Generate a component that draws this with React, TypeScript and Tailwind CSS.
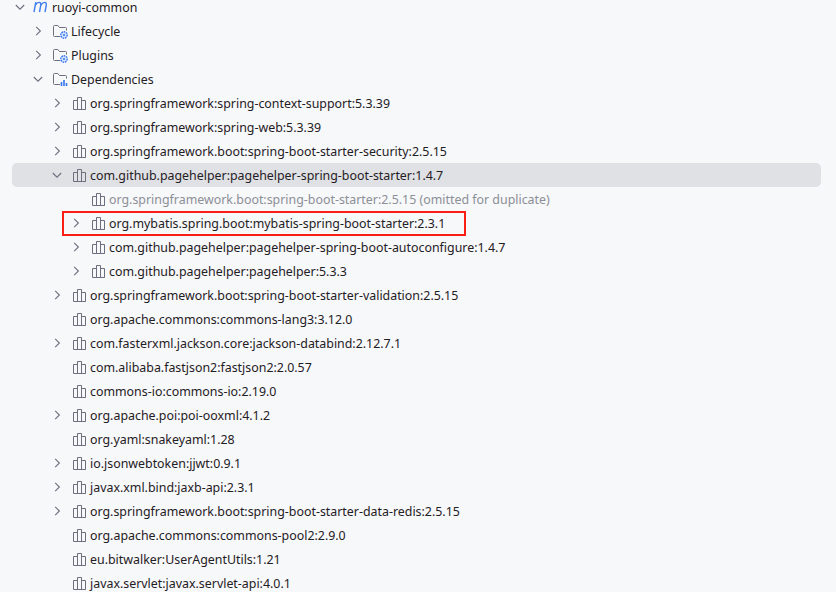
import type { ReactNode } from "react";

type Node = {
  label: string;
  level: 2 | 3;
  arrow?: "right" | "down";
  muted?: boolean;
  active?: boolean;
  boxed?: boolean;
};

const indent = {
  2: "pl-[40px]",
  3: "pl-[59px]",
};

const deps: Node[] = [
  { label: "org.springframework:spring-context-support:5.3.39", level: 2, arrow: "right" },
  { label: "org.springframework:spring-web:5.3.39", level: 2, arrow: "right" },
  { label: "org.springframework.boot:spring-boot-starter-security:2.5.15", level: 2, arrow: "right" },
  { label: "com.github.pagehelper:pagehelper-spring-boot-starter:1.4.7", level: 2, arrow: "down", active: true },
  { label: "org.springframework.boot:spring-boot-starter:2.5.15 (omitted for duplicate)", level: 3, muted: true },
  { label: "org.mybatis.spring.boot:mybatis-spring-boot-starter:2.3.1", level: 3, arrow: "right", boxed: true },
  { label: "com.github.pagehelper:pagehelper-spring-boot-autoconfigure:1.4.7", level: 3, arrow: "right" },
  { label: "com.github.pagehelper:pagehelper:5.3.3", level: 3, arrow: "right" },
  { label: "org.springframework.boot:spring-boot-starter-validation:2.5.15", level: 2, arrow: "right" },
  { label: "org.apache.commons:commons-lang3:3.12.0", level: 2 },
  { label: "com.fasterxml.jackson.core:jackson-databind:2.12.7.1", level: 2, arrow: "right" },
  { label: "com.alibaba.fastjson2:fastjson2:2.0.57", level: 2 },
  { label: "commons-io:commons-io:2.19.0", level: 2 },
  { label: "org.apache.poi:poi-ooxml:4.1.2", level: 2, arrow: "right" },
  { label: "org.yaml:snakeyaml:1.28", level: 2 },
  { label: "io.jsonwebtoken:jjwt:0.9.1", level: 2, arrow: "right" },
  { label: "javax.xml.bind:jaxb-api:2.3.1", level: 2, arrow: "right" },
  { label: "org.springframework.boot:spring-boot-starter-data-redis:2.5.15", level: 2, arrow: "right" },
  { label: "org.apache.commons:commons-pool2:2.9.0", level: 2 },
  { label: "eu.bitwalker:UserAgentUtils:1.21", level: 2 },
  { label: "javax.servlet:javax.servlet-api:4.0.1", level: 2 },
];

const Arrow = ({ dir }: { dir?: "right" | "down" }) => (
  <span className="w-[21px] h-4 shrink-0 flex items-center">
    {dir && (
      <svg width="10" height="10" viewBox="0 0 10 10" fill="none" stroke="#6c707e" strokeWidth="1.1">
        {dir === "right" ? <path d="M3.2.8 7.4 5 3.2 9.2" /> : <path d="M.8 3 5 7.2 9.2 3" />}
      </svg>
    )}
  </span>
);

const LibIcon = () => (
  <svg className="shrink-0 mr-[4px]" width="13" height="13" viewBox="0 0 13 13" fill="none" stroke="#6c707e">
    <path d="M.5 12.5v-9h4v9M4.5 12.5V.5h4v12M8.5 12.5v-9h4v9zM.5 12.5h12" />
  </svg>
);

const MavenIcon = () => (
  <svg className="shrink-0 -ml-[3px] mr-[3px] -mt-[1px]" width="16" height="12" viewBox="0 0 16 12" fill="none" stroke="#3f7cf0" strokeWidth="1.4">
    <path d="M1 11 2.8 1.2M2.5 4C3.5 2.4 5 1.4 6.2 1.4 7.8 1.4 8 3 7.7 4.5L6.5 11M7.9 4C9 2.4 10.5 1.4 11.7 1.4 13.3 1.4 13.5 3 13.2 4.5L12 11" />
  </svg>
);

const FolderIcon = ({ badge }: { badge: ReactNode }) => (
  <svg className="shrink-0 -ml-[2px] mr-[3px]" width="16" height="16" viewBox="0 0 16 16" fill="none">
    <path d="M8 13.5H2.5a1 1 0 0 1-1-1v-9a1 1 0 0 1 1-1h3.3l1.7 2h6a1 1 0 0 1 1 1v2" stroke="#6c707e" />
    {badge}
  </svg>
);

const gear = (
  <g>
    <circle cx="12" cy="12" r="3.2" fill="#d6e4fb" stroke="#3574f0" strokeWidth="1.4" strokeDasharray="1.6 .8" />
    <circle cx="12" cy="12" r="1" fill="#3574f0" />
  </g>
);

const bars = <path d="M9.5 15v-4M12 15V9M14.5 15v-3" stroke="#3574f0" strokeWidth="1.6" />;

const Row = ({ node }: { node: Node }) => (
  <div
    className={`relative h-6 flex items-center rounded-[5px] ${indent[node.level]} ${
      node.active ? "bg-[#dfe1e5]" : ""
    } ${node.muted ? "text-[#8c8f97]" : "text-[#1f2024]"}`}
  >
    <Arrow dir={node.arrow} />
    <LibIcon />
    <span className="whitespace-nowrap pt-[2px]">{node.label}</span>
    {node.boxed && (
      <span className="absolute left-[50px] top-0 w-[404px] h-[25px] border-2 border-[#fa1e14]" />
    )}
  </div>
);

const Top = ({ label, icon, open }: { label: string; icon: ReactNode; open?: boolean }) => (
  <div className="h-6 flex items-center pl-[21px] text-[#1f2024]">
    <Arrow dir={open ? "down" : "right"} />
    {icon}
    <span className="whitespace-nowrap pt-[2px]">{label}</span>
  </div>
);

export default function App() {
  return (
    <div className="w-[836px] h-[592px] overflow-hidden bg-[#f7f8fa] font-['Noto_Sans',sans-serif] text-[12.4px]">
      <div className="pt-[0.1px] -mt-[5px] ml-3 mr-[15px]">
        <div className="h-6 flex items-center pl-[3px] text-[#1f2024]">
          <Arrow dir="down" />
          <MavenIcon />
          <span className="pt-[2px]">ruoyi-common</span>
        </div>
        <Top label="Lifecycle" icon={<FolderIcon badge={gear} />} />
        <Top label="Plugins" icon={<FolderIcon badge={gear} />} />
        <Top label="Dependencies" icon={<FolderIcon badge={bars} />} open />
        {deps.map((d) => (
          <Row key={d.label} node={d} />
        ))}
      </div>
    </div>
  );
}
